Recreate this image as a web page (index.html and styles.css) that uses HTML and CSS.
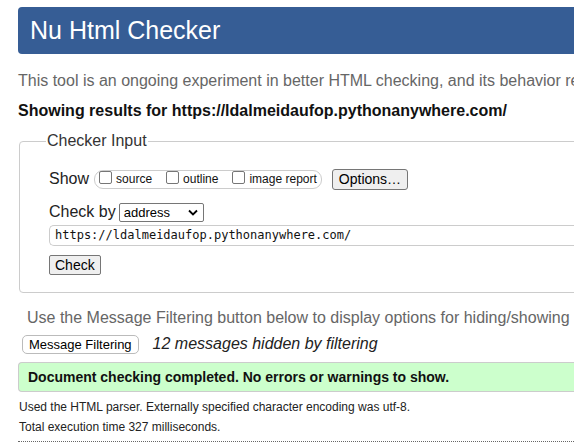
FILE: index.html
```html
<!DOCTYPE html>
<html>
<head>
<meta charset="utf-8">
<title>Nu Html Checker</title>
<link rel="stylesheet" href="styles.css">
</head>
<body>
<div class="page">
  <h1 class="banner">Nu Html Checker</h1>
  <p class="intro">This tool is an ongoing experiment in better HTML checking, and its behavior remains subject to change</p>
  <p class="results">Showing results for https://ldalmeidaufop.pythonanywhere.com/</p>
  <fieldset class="checker">
    <legend class="legend">Checker Input</legend>
    <div class="row show-row">
      <span class="lbl">Show</span>
      <span class="showbox">
        <label class="opt"><span class="cb"></span>source</label>
        <label class="opt"><span class="cb"></span>outline</label>
        <label class="opt"><span class="cb"></span>image report</label>
      </span>
      <button class="btn options">Options…</button>
    </div>
    <div class="row by-row">
      <span class="lbl">Check by</span>
      <span class="select">address<svg class="chev" width="10" height="7" viewBox="0 0 10 7"><path d="M1 1.5 L5 5.5 L9 1.5" fill="none" stroke="#000" stroke-width="1.8"/></svg></span>
    </div>
    <div class="urlbox">https://ldalmeidaufop.pythonanywhere.com/</div>
    <button class="btn check">Check</button>
  </fieldset>
  <p class="filter-note">Use the Message Filtering button below to display options for hiding/showing particular messages, and to see total counts of errors and warnings.</p>
  <div class="filter-row">
    <button class="btn mf">Message Filtering</button>
    <span class="hidden-count">12 messages hidden by filtering</span>
  </div>
  <div class="success">Document checking completed. No errors or warnings to show.</div>
  <p class="meta">Used the HTML parser. Externally specified character encoding was utf-8.</p>
  <p class="meta">Total execution time 327 milliseconds.</p>
  <hr class="dots">
</div>
</body>
</html>
```

FILE: styles.css
```css
html, body {
  margin: 0;
  padding: 0;
  overflow: hidden;
  background: #fff;
}
body {
  font-family: "Liberation Sans", Arial, sans-serif;
  color: #000;
}
.page {
  width: 1000px;
  padding: 7px 0 0 18px;
}
.banner {
  margin: 0;
  height: 47px;
  box-sizing: border-box;
  background: #365d95;
  color: #fff;
  border-radius: 4px;
  font-weight: normal;
  font-size: 25px;
  line-height: 47px;
  padding-left: 12px;
}
.intro {
  margin: 17px 0 0 0;
  color: #666;
  font-size: 16px;
  line-height: 20px;
  white-space: nowrap;
}
.results {
  margin: 10px 0 0 0;
  font-weight: bold;
  font-size: 16px;
  line-height: 20px;
  color: #111;
  white-space: nowrap;
}
.checker {
  margin: 11px 0 0 1px;
  border: 1px solid #ccc;
  border-radius: 4px;
  padding: 18px 0 17px 29px;
}
.legend {
  padding: 0 1px;
  margin-left: -3px;
  font-size: 16px;
  color: #333;
}
.row {
  display: flex;
  align-items: center;
}
.lbl {
  font-size: 16px;
  color: #222;
}
.show-row {
  height: 22px;
}
.showbox {
  display: inline-flex;
  align-items: center;
  margin-left: 5px;
  height: 17px;
  border: 1px solid #ccc;
  border-radius: 9px;
  padding: 0 4px 0 4px;
}
.opt {
  display: inline-flex;
  align-items: center;
  font-size: 12px;
  color: #111;
  margin-right: 14px;
}
.opt:last-child { margin-right: 0; }
.cb {
  display: inline-block;
  width: 11px;
  height: 11px;
  border: 1px solid #767676;
  border-radius: 2px;
  margin-right: 4px;
  margin-top: -4px;
}
.btn {
  font-family: "Liberation Sans", Arial, sans-serif;
  background: #efefef;
  border: 1px solid #767676;
  border-radius: 2px;
  color: #000;
  padding: 0 6px;
}
.options {
  margin-left: 10px;
  font-size: 14px;
  height: 21px;
  padding: 0 6px;
  border-radius: 3px;
}
.by-row {
  margin-top: 12px;
  height: 20px;
}
.select {
  display: inline-flex;
  align-items: center;
  justify-content: space-between;
  box-sizing: border-box;
  width: 85px;
  height: 19px;
  margin-left: 3px;
  border: 1px solid #767676;
  border-radius: 2px;
  padding: 0 5px 0 4px;
  font-size: 13px;
}
.urlbox {
  margin-top: 3px;
  height: 21px;
  box-sizing: border-box;
  border: 1px solid #ccc;
  border-right: none;
  border-radius: 5px 0 0 5px;
  padding-left: 5px;
  font-family: "DejaVu Sans Mono", monospace;
  font-size: 12px;
  line-height: 19px;
  color: #111;
}
.check {
  margin-top: 9px;
  font-size: 14px;
  height: 20px;
  padding: 0 5px;
}
.filter-note {
  margin: 15px 0 0 9px;
  color: #666;
  font-size: 16px;
  line-height: 20px;
  white-space: nowrap;
}
.filter-row {
  display: flex;
  align-items: center;
  margin: 6px 0 0 4px;
  height: 20px;
}
.mf {
  background: #fff;
  border: 1px solid #bbb;
  border-radius: 5px;
  font-size: 13px;
  height: 19px;
  padding: 0 6px;
}
.hidden-count {
  margin-left: 14px;
  font-style: italic;
  font-size: 16px;
  color: #222;
}
.success {
  margin-top: 8px;
  height: 30px;
  box-sizing: border-box;
  background: #ccffcc;
  border: 1px solid #ccc;
  border-right: none;
  border-radius: 4px 0 0 4px;
  padding-left: 9px;
  font-weight: bold;
  font-size: 14px;
  line-height: 28px;
  color: #111;
}
.meta {
  margin: 8px 0 0 1px;
  font-size: 12px;
  line-height: 14px;
  color: #222;
}
.meta + .meta { margin-top: 6px; }
.dots {
  margin: 7px 0 0 0;
  border: none;
  border-top: 1px dotted #666;
  height: 0;
}
```
